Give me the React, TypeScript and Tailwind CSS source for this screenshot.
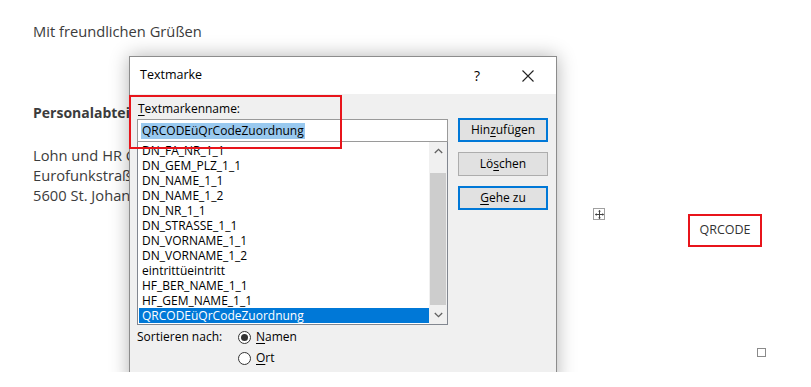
import React from "react";

const items = [
  "DN_FA_NR_1_1",
  "DN_GEM_PLZ_1_1",
  "DN_NAME_1_1",
  "DN_NAME_1_2",
  "DN_NR_1_1",
  "DN_STRASSE_1_1",
  "DN_VORNAME_1_1",
  "DN_VORNAME_1_2",
  "eintrittüeintritt",
  "HF_BER_NAME_1_1",
  "HF_GEM_NAME_1_1",
  "QRCODEüQrCodeZuordnung",
];

function U({ children }: { children: React.ReactNode }) {
  return <span className="underline underline-offset-2 decoration-1">{children}</span>;
}

export default function App() {
  return (
    <div
      className="relative w-[811px] h-[387px] overflow-hidden bg-white"
      style={{ fontFamily: "'Open Sans', 'Noto Sans', sans-serif" }}
    >
      {/* document text */}
      <div className="flex flex-col pl-[33px] pt-[21px] text-[14.7px] leading-[20px] text-[#3c3c3c]">
        <div>Mit freundlichen Grüßen</div>
        <div className="mt-[62px] font-bold text-[14px]">Personalabteilung</div>
        <div className="mt-[22px]">Lohn und HR Centrum</div>
        <div>Eurofunkstraße 1</div>
        <div>5600 St. Johann</div>
      </div>

      {/* move handle */}
      <div className="absolute left-[593px] top-[208px] w-[12px] h-[12px] border border-[#a0a0a0] bg-white flex items-center justify-center">
        <svg width="9" height="9" viewBox="0 0 9 9">
          <path d="M4.5 0.5 V8.5 M0.5 4.5 H8.5" stroke="#444" strokeWidth="1" />
          <path d="M4.5 0 L3 1.6 H6 Z M4.5 9 L3 7.4 H6 Z M0 4.5 L1.6 3 V6 Z M9 4.5 L7.4 3 V6 Z" fill="#444" />
        </svg>
      </div>

      {/* QRCODE box */}
      <div className="absolute left-[688px] top-[214px] w-[74px] h-[33px] border-2 border-[#e8141b] flex items-center justify-center text-[12.5px] text-[#333]">
        QRCODE
      </div>

      {/* small square */}
      <div className="absolute left-[757px] top-[348px] w-[9px] h-[9px] border border-[#8a8a8a] bg-white" />

      {/* dialog */}
      <div
        className="absolute left-[129px] top-[56px] w-[428px] h-[330px] border border-[#8c8c8c] bg-[#f0f0f0] shadow-[0_0_18px_rgba(0,0,0,0.3)] flex flex-col text-[12px] text-black"
        style={{ fontFamily: "'Open Sans', 'Noto Sans', sans-serif" }}
      >
        {/* title bar */}
        <div className="h-[37px] bg-white flex items-center pl-[10px] shrink-0">
          <span className="text-[12.5px]">Textmarke</span>
          <span className="ml-auto mr-[42px] text-[14px]">?</span>
          <svg width="12" height="12" viewBox="0 0 12 12" className="mr-[22px]">
            <path d="M0.5 0.5 L11.5 11.5 M11.5 0.5 L0.5 11.5" stroke="#222" strokeWidth="1.1" />
          </svg>
        </div>

        {/* body */}
        <div className="flex pl-[7px] pt-[6px]">
          {/* left column */}
          <div className="flex flex-col w-[311px]">
            <div className="h-[18px] leading-[18px] pl-[1px]">
              <U>T</U>extmarkenname:
            </div>
            <div className="mt-[1px] h-[23px] bg-white border border-[#9a9a9a] flex items-center pl-[3px]">
              <span className="bg-[#99c9ef] leading-[16px] px-[1px]">QRCODEüQrCodeZuordnung</span>
            </div>
            <div className="h-[183px] bg-white border border-[#828790] border-t-0 flex">
              <div className="flex-1 overflow-hidden flex flex-col pt-[1px] pl-[1px]">
                {items.map((it, i) => (
                  <div
                    key={it}
                    className={
                      "h-[15px] leading-[15px] pl-[3px] shrink-0 " +
                      (i === items.length - 1 ? "bg-[#0078d7] text-white" : "")
                    }
                  >
                    {it}
                  </div>
                ))}
              </div>
              <div className="w-[18px] flex flex-col bg-[#f0f0f0]">
                <div className="h-[17px] flex items-center justify-center">
                  <svg width="9" height="6" viewBox="0 0 9 6">
                    <path d="M0.8 5 L4.5 1.3 L8.2 5" fill="none" stroke="#606060" strokeWidth="1.3" />
                  </svg>
                </div>
                <div className="h-[14px]" />
                <div className="flex-1 bg-[#cdcdcd] mx-[1px]" />
                <div className="h-[19px] flex items-center justify-center">
                  <svg width="9" height="6" viewBox="0 0 9 6">
                    <path d="M0.8 1 L4.5 4.7 L8.2 1" fill="none" stroke="#606060" strokeWidth="1.3" />
                  </svg>
                </div>
              </div>
            </div>
            <div className="flex mt-[3px]">
              <div className="w-[101px] leading-[18px]">Sortieren nach:</div>
              <div className="flex flex-col gap-[3px]">
                <div className="flex items-center h-[18px]">
                  <div className="w-[13px] h-[13px] rounded-full border border-[#333] bg-white flex items-center justify-center">
                    <div className="w-[7px] h-[7px] rounded-full bg-[#333]" />
                  </div>
                  <span className="ml-[5px]">
                    <U>N</U>amen
                  </span>
                </div>
                <div className="flex items-center h-[18px]">
                  <div className="w-[13px] h-[13px] rounded-full border border-[#333] bg-white" />
                  <span className="ml-[5px]">
                    <U>O</U>rt
                  </span>
                </div>
              </div>
            </div>
          </div>

          {/* right column buttons */}
          <div className="flex flex-col ml-[10px] pt-[18px] w-[90px]">
            <div className="h-[24px] border-2 border-[#0078d7] bg-[#e1e1e1] flex items-center justify-center">
              Hin<U>z</U>ufügen
            </div>
            <div className="mt-[10px] h-[24px] border border-[#adadad] bg-[#e1e1e1] flex items-center justify-center">
              Lö<U>s</U>chen
            </div>
            <div className="mt-[10px] h-[24px] border-2 border-[#0078d7] bg-[#e1e1e1] flex items-center justify-center">
              <U>G</U>ehe zu
            </div>
          </div>
        </div>

        {/* red highlight */}
        <div className="absolute left-[-1px] top-[38px] w-[213px] h-[54px] border-2 border-[#e8141b]" />
      </div>

      {/* white strip where the screenshot was cropped */}
      <div className="absolute left-0 top-[372px] w-full h-[15px] bg-white" />
    </div>
  );
}
